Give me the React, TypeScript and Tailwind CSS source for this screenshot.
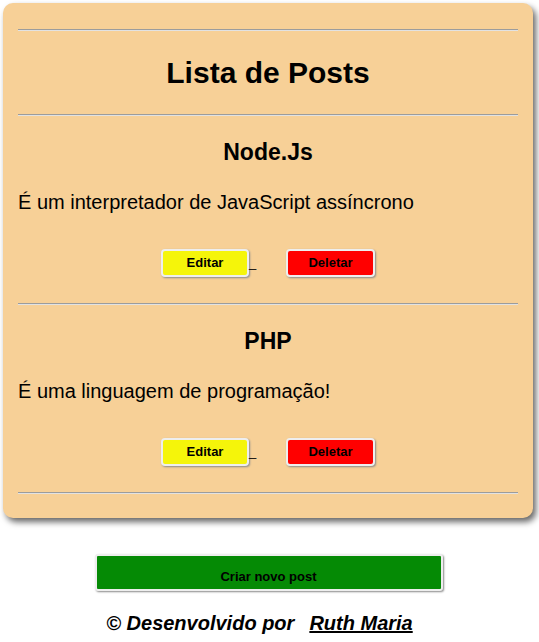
import React from "react";

const posts = [
  { title: "Node.Js", body: "É um interpretador de JavaScript assíncrono" },
  { title: "PHP", body: "É uma linguagem de programação!" },
];

function Hr() {
  return <div className="h-0 border-t border-b border-t-[#9c9c9c] border-b-[#e2e2e2]" />;
}

function Post({ title, body }: { title: string; body: string }) {
  return (
    <div>
      <div className="pt-[22px]">
        <h3 className="text-center text-[23px] leading-[28px] font-bold">{title}</h3>
      </div>
      <p className="mt-[24px] text-[20px] leading-[24px]">{body}</p>
      <div className="mt-[35px] flex justify-center items-start">
        <button className="w-[88px] h-[28px] bg-[#f5f50a] border-2 border-[#eeeeee] rounded-[4px] shadow-[1px_1px_2px_#8a8a8a] text-[13px] font-bold text-black flex items-center justify-center">
          Editar
        </button>
        <span className="text-[13px] leading-[27px] w-[7px] inline-block">_</span>
        <button className="ml-[30px] w-[89px] h-[28px] bg-[#ff0000] border-2 border-[#eeeeee] rounded-[4px] shadow-[1px_1px_2px_#8a8a8a] text-[13px] font-bold text-black flex items-center justify-center">
          Deletar
        </button>
      </div>
      <div className="h-[26px]" />
      <Hr />
    </div>
  );
}

export default function App() {
  return (
    <div className="min-h-[642px] bg-white text-black font-['Liberation_Sans',Arial,sans-serif] pt-[3px] px-[3px]">
      <div className="w-[530px] bg-[#f7d097] rounded-[10px] shadow-[3px_4px_6px_rgba(0,0,0,0.6)] px-[15px] pt-[26px] pb-[24px]">
        <Hr />
        <h1 className="text-center text-[30px] leading-[36px] font-bold mt-[24px] mb-[23px]">
          Lista de Posts
        </h1>
        <Hr />
        {posts.map((p) => (
          <Post key={p.title} title={p.title} body={p.body} />
        ))}
      </div>
      <div className="mt-[36px] flex justify-center w-[530px] pl-[1px]">
        <button className="w-[348px] h-[37px] bg-[#058a05] border-2 border-[#eeeeee] rounded-[3px] shadow-[1px_1px_2px_#8a8a8a] text-[13px] font-bold text-black pt-[8px]">
          Criar novo post
        </button>
      </div>
      <div className="mt-[20px] flex justify-center w-[530px] pr-[17px]">
        <p className="text-[20px] leading-[24px] font-bold italic">
          © Desenvolvido por
          <a className="ml-[15px] underline">Ruth Maria</a>
        </p>
      </div>
    </div>
  );
}
